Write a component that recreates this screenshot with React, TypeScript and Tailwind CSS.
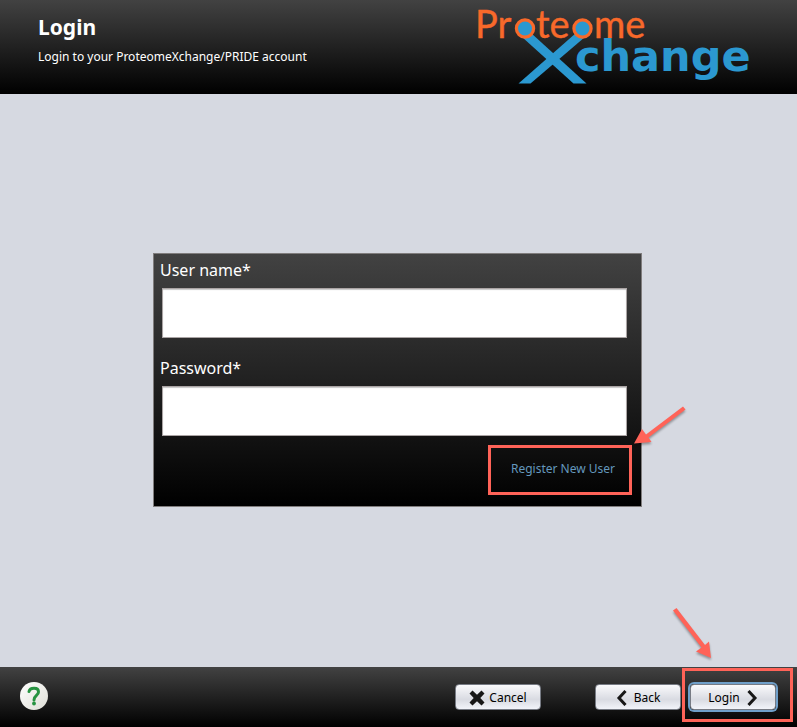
import React from "react";

function Logo() {
  return (
    <svg width="320" height="90" viewBox="474 0 320 90" role="img" aria-label="ProteomeXchange" className="shrink-0 overflow-visible">
      <path d="M518.500 83.500 576 33 585 37 530.500 83.500Z" fill="#2b98d0" />
      <path d="M586.500 83.500 531 33 522 37 573.500 83.500Z" fill="#2b98d0" />
      <circle cx="525" cy="28.500" r="9" fill="#2b98d0" />
      <circle cx="582.500" cy="28.500" r="9" fill="#2b98d0" />
      <g fill="#f8692a" stroke="#f8692a" strokeWidth="0.400" className="font-['Lato',sans-serif]" fontSize="38">
        <text x="475" y="38">Pr</text>
        <text x="536" y="38">te</text>
        <text x="594" y="38">me</text>
      </g>
      <g fill="none" stroke="#f8692a" strokeWidth="3.200">
        <circle cx="525" cy="28.500" r="8.600" />
        <circle cx="582.500" cy="28.500" r="8.600" />
      </g>
      <text x="575" y="71" fill="#2b98d0" fontSize="43" fontWeight="700" className="font-['DejaVu_Sans',sans-serif]">
        change
      </text>
    </svg>
  );
}

type FieldProps = { id: string; label: string; type: string };

function Field({ id, label, type }: FieldProps) {
  return (
    <div className="flex flex-col">
      <label htmlFor={id} className="h-[34px] pt-1 text-base leading-6">
        {label}
      </label>
      <input
        id={id}
        type={type}
        className="ml-0.5 h-[50px] border border-[#aaa4a4] bg-white px-2 text-base text-black shadow-[inset_0_1px_1px_#c8c8c8] outline-none"
      />
    </div>
  );
}

const buttonClass =
  "flex h-[26px] w-[86px] items-center justify-center rounded-[4px] border border-[#777b84] bg-linear-to-b from-[#fafafc] via-[#d9dbe2] via-60% to-[#f2f4fa] pt-0.5 text-xs text-black";

function Arrow({ path, className }: { path: string; className: string }) {
  return (
    <svg width="60" height="60" viewBox="0 0 60 60" aria-hidden="true" className={className}>
      <path d={path} fill="#ff6358" />
    </svg>
  );
}

export default function App() {
  return (
    <div className="flex min-h-screen flex-col bg-[#d6d9e1] font-['Noto_Sans',sans-serif] text-white">
      <header className="flex h-[94px] justify-between bg-linear-to-b/srgb from-[#424242] to-black pr-[3px] pl-[38px]">
        <div className="pt-3">
          <h1 className="text-[21px] leading-[30px] font-bold">Login</h1>
          <p className="pt-[7px] text-xs leading-4">Login to your ProteomeXchange/PRIDE account</p>
        </div>
        <Logo />
      </header>

      <main className="flex flex-1 items-center justify-center pr-0.5 pb-0.5">
        <form className="flex w-full max-w-[489px] flex-col gap-3.5 border border-[#807d7d] bg-linear-to-b/srgb from-[#424242] to-black pr-3.5 pb-[18px] pl-1.5">
          <Field id="user" label="User name*" type="text" />
          <Field id="password" label="Password*" type="password" />
          <div className="flex h-[38px] items-center justify-end pr-3">
            <a href="#register" className="relative text-xs leading-4 text-[#6498bd]">
              Register New User
              <span className="pointer-events-none absolute -top-4 -right-[17px] -bottom-[18px] -left-[23px] border-3 border-[#ff6358]" />
              <Arrow
                path="M5 44.500 13 30 17 35.500 54 7.500 56.500 10.500 19.500 38.500 22.500 43Z"
                className="pointer-events-none absolute -top-[62px] left-[118px] drop-shadow-[0_2px_1px_#00000055]"
              />
            </a>
          </div>
        </form>
      </main>

      <footer className="flex h-[60px] items-center bg-linear-to-b/srgb from-[#424242] to-black pr-[21px] pb-0.5 pl-5">
        <button
          type="button"
          aria-label="Help"
          className="flex size-7 items-center justify-center rounded-full bg-linear-to-br from-white to-[#deded6]"
        >
          <svg width="28" height="28" viewBox="0 0 28 28" aria-hidden="true">
            <path
              d="M9 9.500C10 5.200 18.500 5 18.500 10 18.500 13.500 14 13.500 14 18"
              fill="none"
              stroke="#279341"
              strokeWidth="3"
              strokeLinecap="round"
            />
            <circle cx="14" cy="21.500" r="1.900" fill="#279341" />
          </svg>
        </button>
        <div className="ml-auto flex items-center pt-0.5">
          <button type="button" className={`${buttonClass} mr-[54px] gap-1`}>
            <svg width="16" height="16" viewBox="0 0 16 16" aria-hidden="true">
              <path
                d="M3.500 0.500 8 4.700 12.500 0.500 15.500 3.500 11.300 8 15.500 12.500 12.500 15.500 8 11.300 3.500 15.500 0.500 12.500 4.700 8 0.500 3.500Z"
                fill="#171717"
              />
            </svg>
            Cancel
          </button>
          <button type="button" className={`${buttonClass} mr-[9px] gap-1.5`}>
            <svg width="12" height="16" viewBox="0 0 12 16" aria-hidden="true">
              <path d="M9.500 1 3 8 9.500 15" fill="none" stroke="#171717" strokeWidth="3" />
            </svg>
            Back
          </button>
          <div className="relative">
            <button type="submit" className={`${buttonClass} gap-1.5 ring-2 ring-[#6f9fc9]`}>
              Login
              <svg width="12" height="16" viewBox="0 0 12 16" aria-hidden="true">
                <path d="M2.500 1 9 8 2.500 15" fill="none" stroke="#171717" strokeWidth="3" />
              </svg>
            </button>
            <span className="pointer-events-none absolute -top-4 -right-[17px] -bottom-3 -left-2 border-3 border-[#ff6358]" />
            <Arrow
              path="M42 53 27 46.500 32.500 42.500 4 5.500 7.500 3 36 40 40 36.500Z"
              className="pointer-events-none absolute -top-[79px] -left-[21px] drop-shadow-[0_2px_1px_#00000055]"
            />
          </div>
        </div>
      </footer>
    </div>
  );
}
